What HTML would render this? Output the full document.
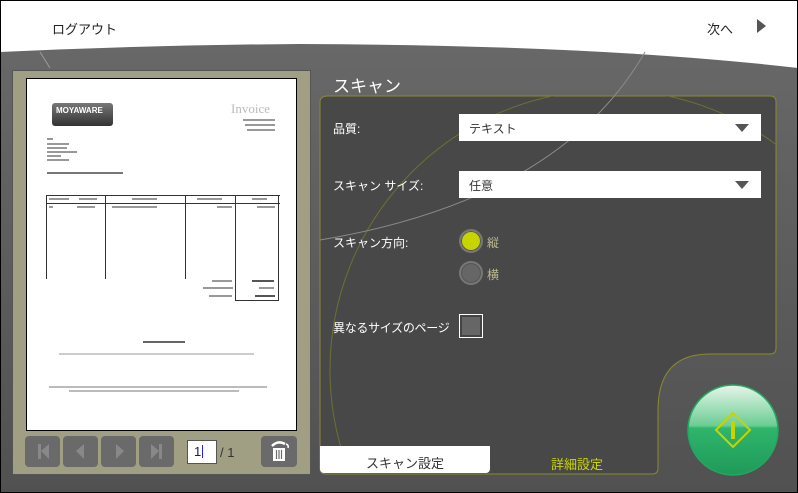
<!DOCTYPE html>
<html><head><meta charset="utf-8"><style>
*{margin:0;padding:0;box-sizing:border-box}
html,body{width:798px;height:493px;overflow:hidden}
body{position:relative;font-family:"Liberation Sans","Noto Sans CJK JP",sans-serif;background:#585858}
.a{position:absolute}
.t{color:#fff;font-size:12px}
.sel{background:#fff;height:27px;width:302px;left:459px;color:#333;font-size:12px;padding:6px 10px}
.sel:after{content:"";position:absolute;right:12px;top:10px;border-left:7px solid transparent;border-right:7px solid transparent;border-top:8px solid #555}
.nb{top:436px;width:35px;height:31px;background:#6a6a6a;border-radius:4px}
.ln{position:absolute;background:#333}
.tx{position:absolute;height:2px;background:#999}
</style></head><body>
<svg class="a" style="left:0;top:0" width="798" height="493">
<defs><linearGradient id="bg" x1="0" y1="0" x2="0" y2="1"><stop offset="0" stop-color="#6a6a6a"/><stop offset="1" stop-color="#515151"/></linearGradient>
<linearGradient id="gl" x1="0" y1="0" x2="0" y2="1"><stop offset="0" stop-color="#e6f5ea"/><stop offset="0.45" stop-color="#6ccd93"/><stop offset="0.48" stop-color="#2fb56c"/><stop offset="1" stop-color="#1f9a58"/></linearGradient>
<clipPath id="c"><path d="M328 96 H770 Q776 96 776 102 V348 Q776 354 770 354 H710 Q658 354 658 410 V468 Q658 474 652 474 H326 Q320 474 320 468 V102 Q320 96 328 96Z"/></clipPath></defs>
<rect width="798" height="493" fill="url(#bg)"/>
<path d="M0 0H798V68Q600 45 300 44Q150 45 0 52Z" fill="#fff"/>
<path d="M40 52 L50 68" stroke="#999" stroke-width="1"/>
<path d="M328 96 H770 Q776 96 776 102 V348 Q776 354 770 354 H710 Q658 354 658 410 V468 Q658 474 652 474 H326 Q320 474 320 468 V102 Q320 96 328 96Z" fill="#484848" stroke="#8a8a30" stroke-width="1"/>
<circle cx="610" cy="370" r="280" fill="none" stroke="#6e7030" stroke-width="1" clip-path="url(#c)"/>
<path d="M645 52 Q560 200 320 240" stroke="#8a8a8a" fill="none"/>
<circle cx="733" cy="430" r="45" fill="url(#gl)" stroke="#22a860" stroke-width="1.5"/>
<path d="M733 413 L750 430 L733 447 L716 430Z" fill="none" stroke="#c8d400" stroke-width="2"/>
<rect x="731" y="421" width="4" height="18" fill="#c8d400"/>
</svg>
<div class="a" style="left:52px;top:19px;font-size:13px;color:#222">ログアウト</div>
<div class="a" style="left:707px;top:19px;font-size:13px;color:#222">次へ</div>
<div class="a" style="left:757px;top:19px;border-top:7px solid transparent;border-bottom:7px solid transparent;border-left:9px solid #555"></div>
<div class="a" style="left:12px;top:70px;width:299px;height:405px;background:#a09f84;border:1px solid #555"></div>
<div class="a" style="left:26px;top:78px;width:271px;height:353px;background:#fff;border:1px solid #000">
 <div class="a" style="left:25px;top:24px;width:61px;height:23px;background:linear-gradient(#777,#333);border-radius:3px;color:#fff;font-size:8px;font-weight:bold;padding:3px 4px">MOYAWARE</div>
 <div class="a" style="left:204px;top:22px;font-size:13px;color:#bbb;font-family:'Liberation Serif',serif">Invoice</div>
 <div class="tx" style="left:216px;top:40px;width:32px"></div><div class="tx" style="left:218px;top:45px;width:30px"></div><div class="tx" style="left:220px;top:50px;width:28px"></div>
 <div class="tx" style="left:20px;top:59px;width:6px"></div><div class="tx" style="left:20px;top:64px;width:22px"></div><div class="tx" style="left:20px;top:68px;width:20px"></div><div class="tx" style="left:20px;top:72px;width:30px"></div><div class="tx" style="left:20px;top:76px;width:14px"></div><div class="tx" style="left:20px;top:80px;width:22px"></div>
 <div class="tx" style="left:20px;top:93px;width:76px;background:#777"></div>
 <div class="ln" style="left:19px;top:116px;width:234px;height:1px"></div>
 <div class="ln" style="left:19px;top:124px;width:234px;height:1px"></div>
 <div class="ln" style="left:19px;top:116px;width:1px;height:84px"></div>
 <div class="ln" style="left:78px;top:116px;width:1px;height:84px"></div>
 <div class="ln" style="left:158px;top:116px;width:1px;height:84px"></div>
 <div class="ln" style="left:208px;top:116px;width:1px;height:105px"></div>
 <div class="ln" style="left:251px;top:116px;width:1px;height:105px"></div>
 <div class="ln" style="left:208px;top:221px;width:44px;height:1px"></div>
 <div class="tx" style="left:22px;top:119px;width:20px"></div><div class="tx" style="left:52px;top:119px;width:18px"></div><div class="tx" style="left:105px;top:119px;width:25px"></div><div class="tx" style="left:170px;top:119px;width:25px"></div><div class="tx" style="left:225px;top:119px;width:15px"></div>
 <div class="tx" style="left:22px;top:127px;width:4px"></div><div class="tx" style="left:50px;top:127px;width:18px"></div><div class="tx" style="left:85px;top:127px;width:45px"></div><div class="tx" style="left:190px;top:127px;width:15px"></div><div class="tx" style="left:230px;top:127px;width:18px"></div>
 <div class="tx" style="left:185px;top:201px;width:20px"></div><div class="tx" style="left:225px;top:201px;width:22px;background:#555"></div>
 <div class="tx" style="left:176px;top:208px;width:30px"></div><div class="tx" style="left:232px;top:208px;width:15px"></div>
 <div class="tx" style="left:182px;top:216px;width:23px"></div><div class="tx" style="left:228px;top:216px;width:20px;background:#555"></div>
 <div class="tx" style="left:116px;top:262px;width:42px;background:#666"></div>
 <div class="tx" style="left:32px;top:274px;width:195px;background:#ccc"></div>
 <div class="tx" style="left:22px;top:307px;width:218px;background:#bbb"></div>
 <div class="tx" style="left:42px;top:311px;width:170px;background:#bbb"></div>
</div>
<div class="a nb" style="left:25px"></div><div class="a nb" style="left:63px"></div><div class="a nb" style="left:101px"></div><div class="a nb" style="left:139px"></div>
<div class="a" style="left:38px;top:444px;width:3px;height:15px;background:#888"></div><div class="a" style="left:41px;top:444px;border-top:7px solid transparent;border-bottom:8px solid transparent;border-right:8px solid #888"></div>
<div class="a" style="left:76px;top:444px;border-top:7px solid transparent;border-bottom:8px solid transparent;border-right:8px solid #888"></div>
<div class="a" style="left:116px;top:444px;border-top:7px solid transparent;border-bottom:8px solid transparent;border-left:8px solid #888"></div>
<div class="a" style="left:151px;top:444px;border-top:7px solid transparent;border-bottom:8px solid transparent;border-left:8px solid #888"></div><div class="a" style="left:159px;top:444px;width:3px;height:15px;background:#888"></div>
<div class="a" style="left:187px;top:440px;width:30px;height:24px;background:#fff;border:1px solid #555;font-size:13px;padding:3px 6px;color:#222">1<span style="display:inline-block;width:1px;height:13px;background:#22f;vertical-align:-2px;margin-left:1px"></span></div>
<div class="a" style="left:220px;top:445px;font-size:13px;color:#333">/ 1</div>
<div class="a" style="left:261px;top:436px;width:36px;height:31px;background:#6a6a6a;border-radius:4px"></div>
<svg class="a" style="left:268px;top:440px" width="24" height="24"><path d="M4 6 Q10 0 17 4" stroke="#fff" stroke-width="2.5" fill="none"/><path d="M5 8 H17 V21 H5Z" fill="#fff"/><path d="M8.5 10V19M11 10V19M13.5 10V19" stroke="#6a6a6a" stroke-width="1.2"/><path d="M18 4 Q21 5 20 8" stroke="#fff" stroke-width="1.5" fill="none"/></svg>
<div class="a" style="left:333px;top:72px;font-size:17px;color:#fff">スキャン</div>
<div class="a t" style="left:333px;top:120px">品質:</div>
<div class="a sel" style="top:114px">テキスト</div>
<div class="a t" style="left:333px;top:177px">スキャン サイズ:</div>
<div class="a sel" style="top:171px">任意</div>
<div class="a t" style="left:333px;top:234px">スキャン方向:</div>
<div class="a" style="left:459px;top:229px;width:24px;height:24px;border-radius:50%;border:2px solid #777;background:#c8d400;box-shadow:inset 0 0 0 1px #555"></div>
<div class="a" style="left:487px;top:234px;font-size:12px;color:#bcb990">縦</div>
<div class="a" style="left:459px;top:261px;width:24px;height:24px;border-radius:50%;border:2px solid #777;background:#666;box-shadow:inset 0 0 0 1px #555"></div>
<div class="a" style="left:487px;top:266px;font-size:12px;color:#bcb990">横</div>
<div class="a t" style="left:333px;top:319px;letter-spacing:-0.3px">異なるサイズのページ</div>
<div class="a" style="left:459px;top:314px;width:24px;height:24px;border:1px solid #fff;background:#666;box-shadow:inset 0 0 0 2px #444"></div>
<div class="a" style="left:320px;top:446px;width:170px;height:27px;background:#fff;border-radius:0 0 4px 4px;font-size:13px;color:#333;text-align:center;padding-top:7px">スキャン設定</div>
<div class="a" style="left:551px;top:454px;font-size:13px;color:#c8d400">詳細設定</div>
<div class="a" style="left:0;top:0;width:798px;height:493px;border:1px solid #000"></div>
</body></html>
